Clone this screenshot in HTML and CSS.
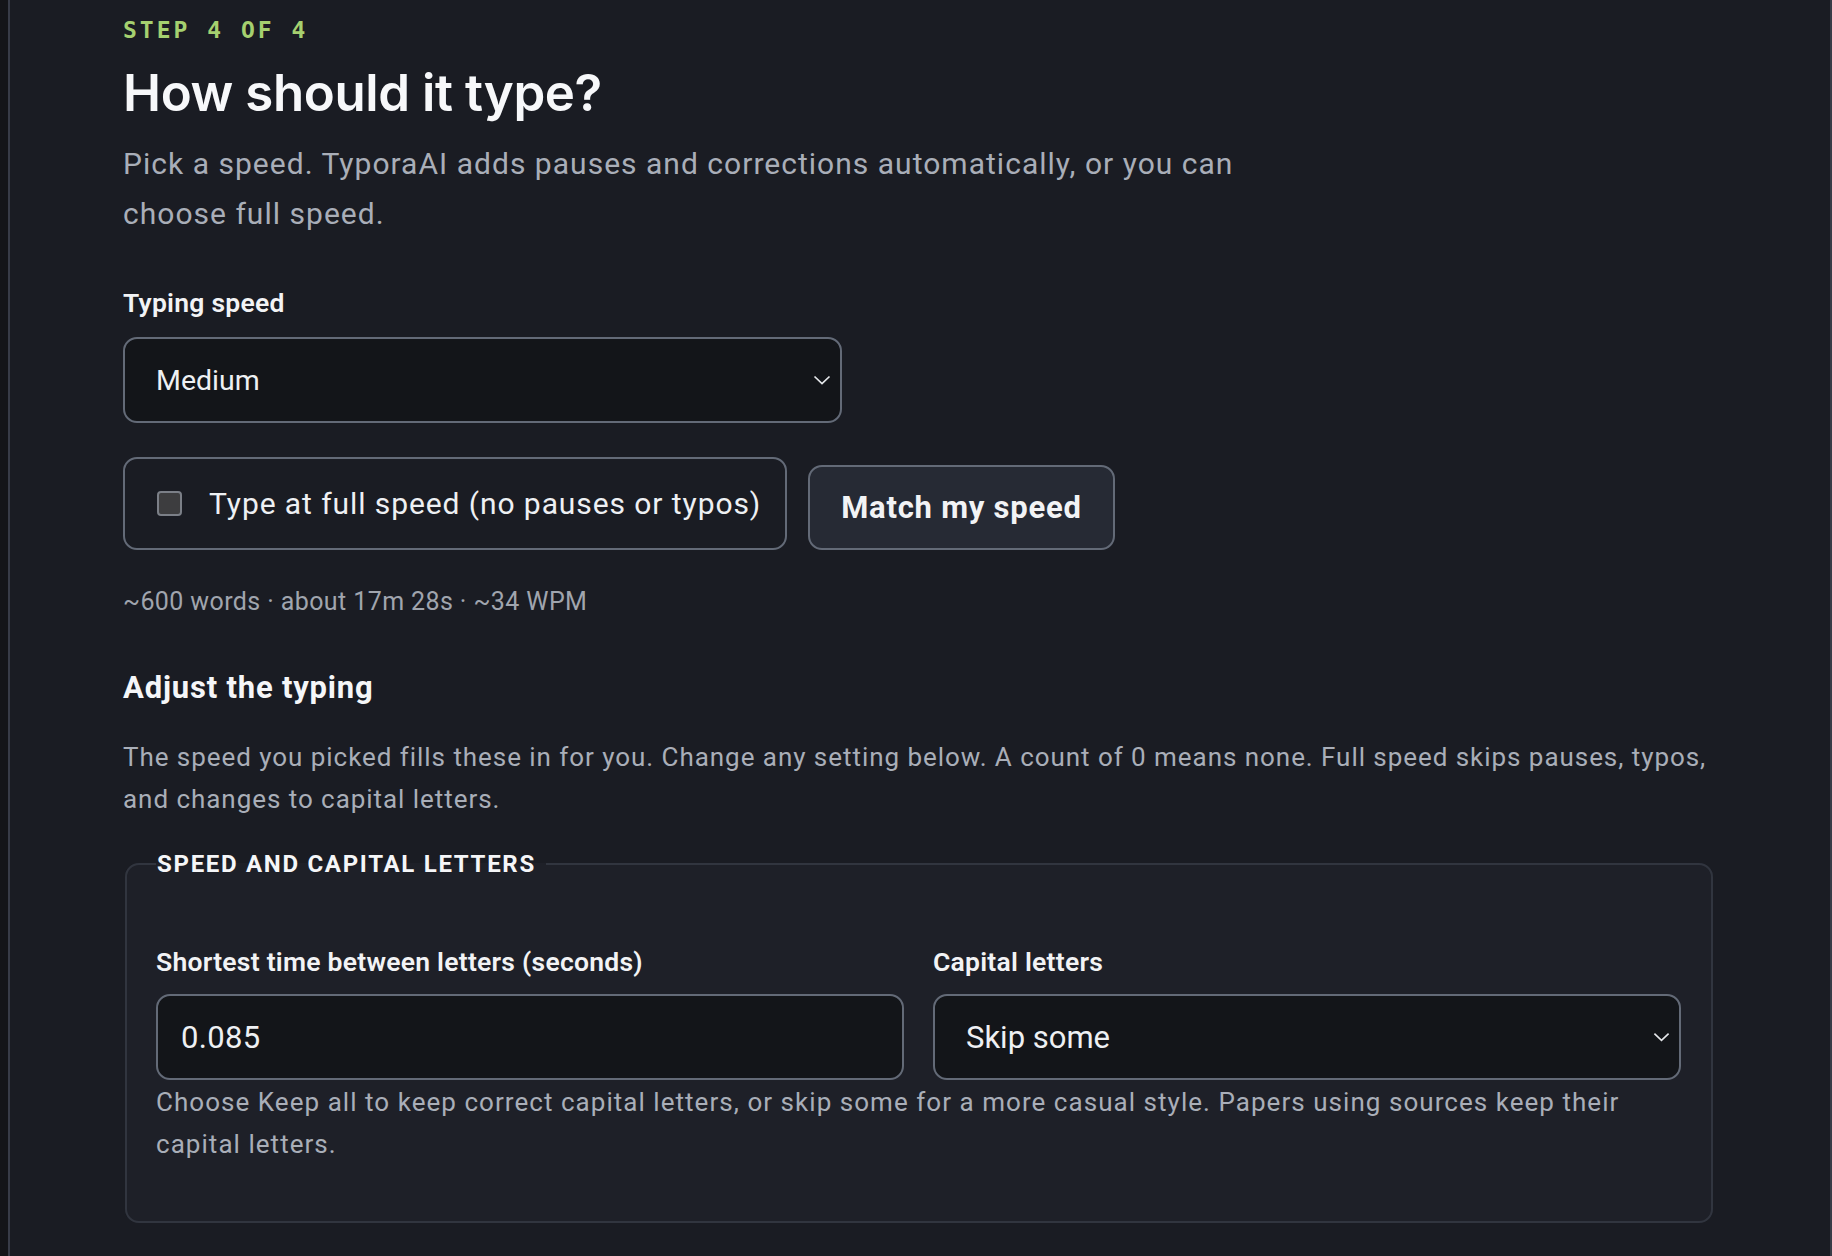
FILE: index.html
```html
<!DOCTYPE html>
<html lang="en">
<head>
<meta charset="utf-8">
<title>How should it type?</title>
<link rel="stylesheet" href="styles.css">
</head>
<body>
<div class="frame">
  <main class="content">
    <div class="step">STEP 4 OF 4</div>
    <h1 class="title">How should it type?</h1>
    <p class="lead">Pick a speed. TyporaAI adds pauses and corrections automatically, or you can choose full speed.</p>

    <div class="field-label">Typing speed</div>
    <div class="select select-main">
      <span class="select-value">Medium</span>
      <svg class="chev" viewBox="0 0 18 10" width="18" height="10"><path d="M1.5 1.5 L9 8.5 L16.5 1.5"/></svg>
    </div>

    <div class="speed-row">
      <label class="check-box">
        <input type="checkbox" class="check">
        <span class="check-text">Type at full speed (no pauses or typos)</span>
      </label>
      <button class="btn" type="button">Match my speed</button>
    </div>

    <div class="stats">~600 words · about 17m 28s · ~34 WPM</div>

    <h2 class="subtitle">Adjust the typing</h2>
    <p class="desc">The speed you picked fills these in for you. Change any setting below. A count of 0 means none. Full speed skips pauses, typos, and changes to capital letters.</p>

    <fieldset class="group">
      <legend class="group-title">SPEED AND CAPITAL LETTERS</legend>
      <div class="grid">
        <div class="col">
          <div class="field-label">Shortest time between letters (seconds)</div>
          <div class="input">0.085</div>
        </div>
        <div class="col">
          <div class="field-label">Capital letters</div>
          <div class="select select-sub">
            <span class="select-value">Skip some</span>
            <svg class="chev" viewBox="0 0 18 10" width="17" height="10"><path d="M1.5 1.5 L9 8.5 L16.5 1.5"/></svg>
          </div>
        </div>
      </div>
      <p class="help">Choose Keep all to keep correct capital letters, or skip some for a more casual style. Papers using sources keep their capital letters.</p>
    </fieldset>
  </main>
</div>
</body>
</html>
```

FILE: styles.css
```css
* { box-sizing: border-box; }

html, body {
  margin: 0;
  background: #141518;
  height: 100%;
}

body {
  font-family: Roboto, "Liberation Sans", sans-serif;
  color: #eef0f3;
  overflow: hidden;
}

.frame {
  margin-left: 8px;
  min-height: 100vh;
  background: #1a1c23;
  border-left: 2px solid #383c47;
  border-right: 2px solid #383c47;
  padding: 15px 115px 0 113px;
}

.step {
  font-family: "DejaVu Sans Mono", "Liberation Mono", monospace;
  font-weight: 700;
  font-size: 23px;
  line-height: 30px;
  letter-spacing: 3px;
  color: #a5d06f;
}

.title {
  margin: 18px 0 0;
  font-family: Inter, Roboto, sans-serif;
  font-weight: 600;
  font-size: 51px;
  line-height: 60px;
  letter-spacing: -0.4px;
  color: #f7f8fa;
}

.lead {
  margin: 16px 0 0;
  max-width: 1170px;
  font-size: 30px;
  line-height: 50px;
  letter-spacing: 1.02px;
  color: #a9aeb8;
}

.field-label {
  font-weight: 600;
  font-size: 26.5px;
  line-height: 32px;
  letter-spacing: 0.25px;
  color: #f2f3f5;
}

.content > .field-label {
  margin-top: 48px;
}

.select,
.input {
  height: 86px;
  border: 2px solid #636a77;
  border-radius: 14px;
  background: #131519;
  display: flex;
  align-items: center;
  color: #eef0f3;
}

.select {
  justify-content: space-between;
  padding: 0 9px 0 31px;
}

.select-main {
  width: 719px;
  margin-top: 18px;
  font-size: 28.5px;
}

.select-sub {
  margin-top: 16px;
  font-size: 31px;
}

.input {
  margin-top: 16px;
  padding: 0 23px;
  font-size: 31px;
  letter-spacing: 0.3px;
}

.chev {
  fill: none;
  stroke: #e6e8eb;
  stroke-width: 1.7;
}

.speed-row {
  margin-top: 34px;
  display: flex;
  align-items: flex-end;
  gap: 21px;
}

.check-box {
  height: 93px;
  display: flex;
  align-items: center;
  gap: 27px;
  padding: 0 24px 0 32px;
  border: 2px solid #636a77;
  border-radius: 14px;
}

.check {
  appearance: none;
  -webkit-appearance: none;
  margin: 0;
  width: 25px;
  height: 25px;
  border: 2px solid #7b7f87;
  border-radius: 4px;
  background: #3d3d3f;
}

.check-text {
  font-size: 30px;
  letter-spacing: 0.92px;
  color: #eef0f3;
}

.btn {
  height: 85px;
  padding: 0 31px;
  border: 2px solid #636a77;
  border-radius: 14px;
  background: #262a34;
  color: #f2f3f5;
  font-family: Roboto, "Liberation Sans", sans-serif;
  font-weight: 700;
  font-size: 31px;
  letter-spacing: 0.75px;
}

.stats {
  margin-top: 36px;
  font-size: 25px;
  line-height: 32px;
  letter-spacing: 0.4px;
  color: #a0a5ae;
}

.subtitle {
  margin: 52px 0 0;
  font-weight: 700;
  font-size: 31px;
  line-height: 36px;
  letter-spacing: 0.8px;
  color: #f5f6f8;
}

.desc {
  margin: 30px 0 0;
  font-size: 26px;
  line-height: 42px;
  letter-spacing: 0.95px;
  color: #a9aeb8;
}

.group {
  margin: 29px 2px 0;
  padding: 67px 30px 56px 29px;
  border: 2px solid #31353f;
  border-radius: 14px;
  background: #1e2028;
  min-width: 0;
}

.group-title {
  padding: 0 10px 0 1px;
  font-weight: 700;
  font-size: 24px;
  line-height: 30px;
  letter-spacing: 1.7px;
  color: #f5f6f8;
}

.grid {
  display: grid;
  grid-template-columns: 1fr 1fr;
  column-gap: 29px;
}

.help {
  margin: 1px 0 0;
  font-size: 26px;
  line-height: 42px;
  letter-spacing: 1.04px;
  color: #a9aeb8;
}
```
